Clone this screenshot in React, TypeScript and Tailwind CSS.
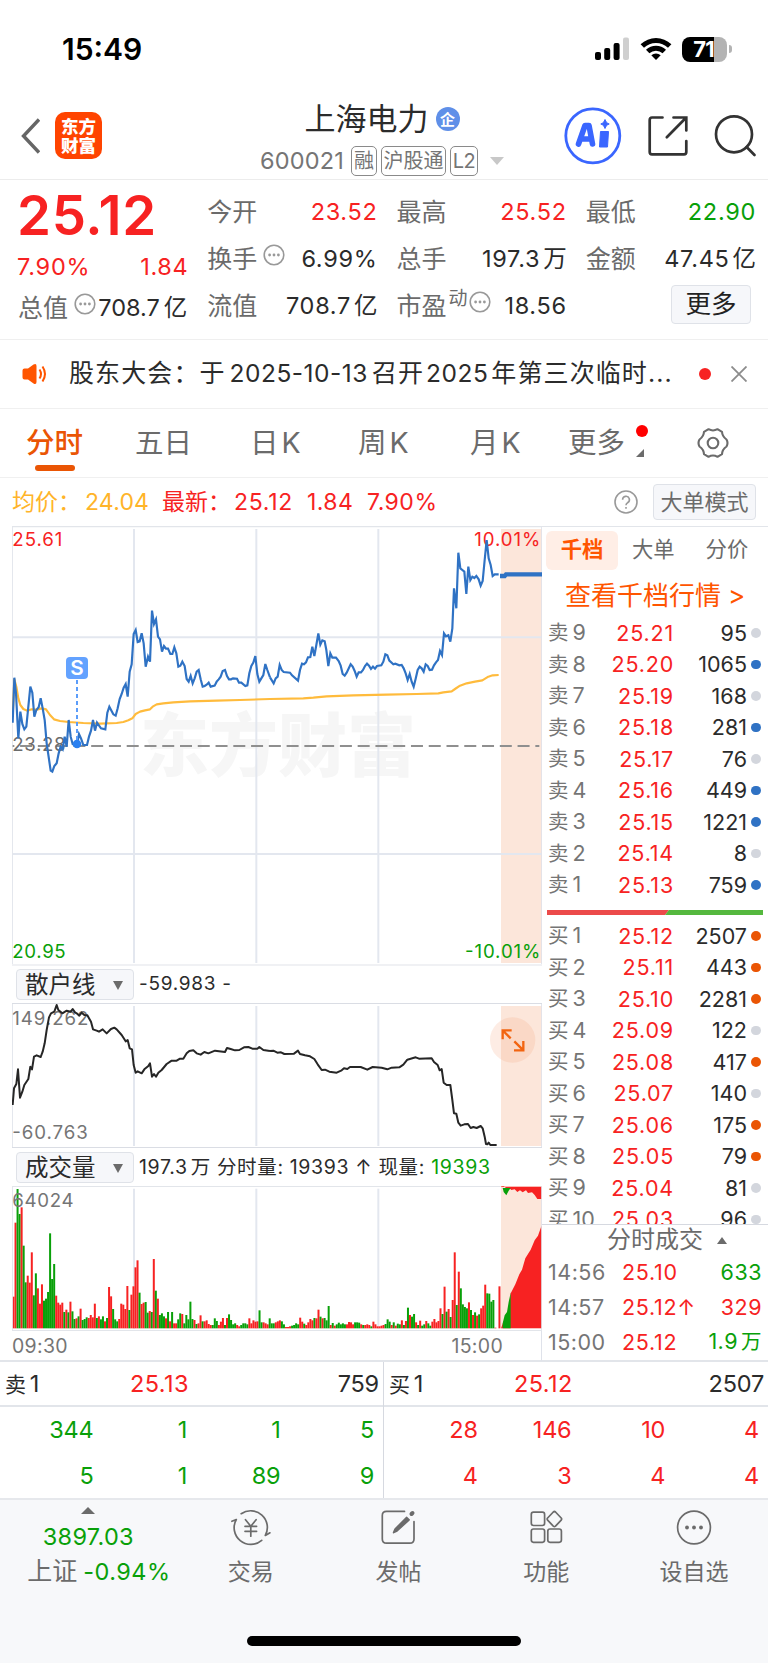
import type { ReactNode } from "react";

type Level = { label: string; price: string; volume: string; dot: "blue" | "orange" | "gray" };

const asks: Level[] = [
  { label: "卖9", price: "25.21", volume: "95", dot: "gray" },
  { label: "卖8", price: "25.20", volume: "1065", dot: "blue" },
  { label: "卖7", price: "25.19", volume: "168", dot: "gray" },
  { label: "卖6", price: "25.18", volume: "281", dot: "blue" },
  { label: "卖5", price: "25.17", volume: "76", dot: "gray" },
  { label: "卖4", price: "25.16", volume: "449", dot: "blue" },
  { label: "卖3", price: "25.15", volume: "1221", dot: "blue" },
  { label: "卖2", price: "25.14", volume: "8", dot: "gray" },
  { label: "卖1", price: "25.13", volume: "759", dot: "blue" },
];

const bids: Level[] = [
  { label: "买1", price: "25.12", volume: "2507", dot: "orange" },
  { label: "买2", price: "25.11", volume: "443", dot: "orange" },
  { label: "买3", price: "25.10", volume: "2281", dot: "orange" },
  { label: "买4", price: "25.09", volume: "122", dot: "gray" },
  { label: "买5", price: "25.08", volume: "417", dot: "orange" },
  { label: "买6", price: "25.07", volume: "140", dot: "gray" },
  { label: "买7", price: "25.06", volume: "175", dot: "orange" },
  { label: "买8", price: "25.05", volume: "79", dot: "orange" },
  { label: "买9", price: "25.04", volume: "81", dot: "gray" },
  { label: "买10", price: "25.03", volume: "96", dot: "gray" },
];

const dotColors = {
  blue: "bg-[#2f72c4]",
  orange: "bg-[#ea5504]",
  gray: "bg-[#d3d6dd]",
};

// Chart coordinates are in thirds of a pixel
const pricePoints =
  "38,608 43,473 48,520 55,655 61,575 67,612 73,628 79,620 91,500 97,518 103,590 109,570 116,562 122,535 128,565 134,600 140,670 152,752 157,755 163,738 170,730 176,700 182,680 188,688 194,650 200,680 206,600 212,650 218,672 231,675 237,642 243,655 250,675 261,675 267,650 273,632 279,600 285,632 291,608 303,625 316,628 322,578 328,560 340,583 347,587 353,565 359,537 365,522 371,503 377,492 383,530 389,455 395,433 401,342 407,330 413,366 419,364 425,340 431,370 437,440 444,410 450,425 456,272 462,312 468,298 474,350 480,358 486,395 492,378 498,386 504,386 511,402 517,402 523,382 529,400 535,440 541,437 547,425 554,438 560,477 566,485 572,468 578,490 584,475 590,455 596,450 602,478 608,500 614,498 620,494 626,488 632,500 644,497 650,485 656,478 662,470 668,453 675,450 681,468 687,478 693,478 699,475 711,476 717,488 724,488 736,498 742,496 748,460 754,438 760,428 766,408 772,462 778,485 784,475 790,465 796,432 802,450 810,472";
const pricePointsLate =
  "0,472 11,490 17,475 23,470 29,435 35,450 41,456 60,458 66,466 84,482 90,450 96,431 102,433 108,427 114,412 121,411 127,380 133,408 139,375 145,340 151,374 157,361 164,364 169,390 175,438 181,400 187,413 198,413 206,423 212,437 218,462 224,467 230,458 242,433 248,440 254,453 260,470 266,457 273,457 279,450 285,438 291,431 297,437 303,447 309,440 315,446 321,438 334,436 340,425 346,403 352,406 358,422 370,433 376,431 388,436 395,435 401,445 407,460 413,480 419,462 425,485 431,500 437,476 443,450 449,440 455,445 461,455 467,433 473,438 479,450 486,449 492,436 498,427 504,420 510,393 516,405 522,340 528,349 535,346 541,365 547,325 552,205 559,265 565,98 571,145 577,150 583,155 589,222 595,140 601,180 607,170 613,174 619,168 626,178 632,197 638,183 644,120 650,60 656,115 662,135 668,168 674,163 686,163";
const averagePoints =
  "38,590 43,478 49,500 55,535 61,555 70,567 82,572 95,568 110,569 125,565 138,568 150,585 162,598 180,603 206,606 250,609 300,611 350,609 370,606 385,601 397,595 407,582 420,575 435,571 450,568 458,560 470,553 490,550 520,547 570,544 650,542 720,540 810,537 910,535 940,533 980,529 1060,526 1160,524 1250,522 1315,520 1330,517 1355,514 1365,507 1380,497 1400,490 1425,485 1447,481 1465,470 1478,466 1496,465";
const retailPoints =
  "38,435 42,385 49,372 54,328 60,413 67,395 73,375 85,357 91,320 96,328 102,290 110,286 122,291 128,275 134,250 140,210 147,172 153,160 163,155 170,135 175,150 187,160 200,152 212,155 218,147 225,157 230,160 238,167 245,158 253,165 262,166 273,185 279,208 290,212 297,215 308,208 320,220 333,207 343,203 350,208 365,225 377,244 383,240 389,265 396,268 401,315 407,338 413,334 425,340 433,328 445,318 450,310 456,350 462,342 468,350 475,338 485,330 500,312 515,302 530,302 540,296 550,296 560,280 568,273 580,271 590,280 602,284 613,276 625,280 645,272 675,276 681,264 692,267 705,271 718,270 732,262 745,261 757,266 772,266 778,261 790,270 810,273";
const retailPointsLate =
  "0,273 10,272 22,278 33,277 43,282 72,281 84,272 90,282 105,286 120,289 133,297 143,313 155,330 165,329 178,335 200,338 215,331 222,325 232,327 240,321 272,321 292,329 308,321 335,323 352,328 365,323 388,322 400,314 412,299 437,292 447,296 485,295 492,306 503,315 509,331 515,327 521,368 530,375 541,375 547,420 552,460 559,461 565,488 572,497 583,493 594,492 602,504 610,501 620,504 632,498 638,505 644,530 648,552 652,553 656,548 661,555 680,555";

// One entry per minute, r = up, g = down
const volumeBars = (
  "r95 r317 g418 g343 r363 g248 g138 r158 r137 r228 g99 g165 r120 r74 r132 g83 g89 g109 g285 g148 " +
  "g193 r98 r77 r71 r77 g49 r56 g48 r80 g51 g28 r30 g36 r59 g25 g28 g33 r31 r40 r33 " +
  "r74 g31 r36 g27 g36 r21 g31 r124 r96 g58 g27 g21 r28 r74 r71 r58 r127 g55 r101 r126 " +
  "r183 r204 g107 r73 r77 g79 g47 r52 g49 r208 g113 r89 g40 g45 g36 r30 g49 r21 g49 r15 " +
  "r15 g27 g45 r43 g15 g40 g27 g80 g28 r25 g13 r15 r39 g21 r21 r24 r13 r10 g10 g30 " +
  "g22 r10 r20 r31 g10 r31 g42 g25 g12 g15 r10 r6 g10 g15 g15 g12 r30 r15 r24 r20 " +
  "r21 g54 g18 r18 r15 r12 g30 g15 g15 r18 r21 r24 g21 g12 r4 r4 r6 g8 g10 g15 " +
  "g12 r32 r20 g14 r10 r18 r28 r24 g31 r30 r56 g35 r30 g31 g24 g67 r10 g16 r8 g12 " +
  "g17 g12 g15 g12 r12 r19 r18 r12 g18 g18 g17 r12 g10 r10 r12 r10 g6 r20 r12 r6 " +
  "r6 r8 r10 g13 g27 g20 r10 g18 r8 g14 g12 r24 g10 r22 g62 r40 g35 g43 r18 g10 " +
  "r23 g8 g12 r22 g15 g8 r20 r28 r18 r22 r60 g43 r125 g50 r58 g34 r85 r228 g70 r170 " +
  "g120 g72 g64 g60 r78 g55 r40 g48 r38 g42 r60 r68 r131 g105 g104 g80 g85 r2 r0 r126"
).split(" ");

const gridX = [402, 769, 1135];

function MoreInfo({ className = "" }: { className?: string }) {
  return (
    <svg viewBox="0 0 22 22" className={`h-[22px] w-[22px] shrink-0 ${className}`} fill="none" stroke="#999">
      <circle cx="11" cy="11" r="9.8" strokeWidth="1.6" />
      <g fill="#999" stroke="none">
        <circle cx="6.6" cy="11" r="1.4" />
        <circle cx="11" cy="11" r="1.4" />
        <circle cx="15.4" cy="11" r="1.4" />
      </g>
    </svg>
  );
}

function Stat({ label, value, unit, color = "text-[#2b2b2b]", extra }: { label: string; value: string; unit?: string; color?: string; extra?: ReactNode }) {
  return (
    <div className="flex items-center justify-between">
      <div className="flex items-center text-[#6b6b6b]">
        <span className="text-[25px] tracking-normal">{label}</span>
        {extra}
      </div>
      <span className={`mr-[-1px] tracking-[0.7px] ${color}`}>
        {value}
        {unit && <span className="ml-[3px] tracking-normal">{unit}</span>}
      </span>
    </div>
  );
}

function StatusBar() {
  return (
    <div className="flex h-[90px] items-center justify-between pt-2 pr-[36px] pl-[62px]">
      <span className="text-[30px] font-semibold text-black">15:49</span>
      <div className="flex items-center">
        <svg width="34" height="24" viewBox="0 0 34 24">
          <rect x="0" y="15" width="6" height="8" rx="2" />
          <rect x="9.2" y="11" width="6" height="12" rx="2" />
          <rect x="18.6" y="6" width="6" height="17" rx="2" />
          <rect x="28" y="0.5" width="6" height="22.5" rx="2" fill="#cfcfcf" />
        </svg>
        <svg width="32" height="24" viewBox="0 0 32 24" className="ml-[11px]">
          <path d="M0.6 7.2A22.5 22.5 0 0 1 31.4 7.2L28 10.7A17.6 17.6 0 0 0 4 10.7Z" />
          <path d="M6 12.8A14.6 14.6 0 0 1 26 12.8L22.6 16.3A9.8 9.8 0 0 0 9.4 16.3Z" />
          <path d="M11.3 18.2A7 7 0 0 1 20.7 18.2L16 23Z" />
        </svg>
        <div className="ml-[10px] flex h-[25px] w-[45px] items-center justify-center overflow-hidden rounded-[8px] bg-linear-to-r from-black from-71% to-[#b3b3b3] to-71%">
          <span className="mr-[2px] text-[22px] leading-none font-bold tracking-[-1px] text-white">71</span>
        </div>
        <div className="ml-[2px] h-2 w-[3px] rounded-r-full bg-[#b3b3b3]" />
      </div>
    </div>
  );
}

function Header() {
  return (
    <header className="flex h-[90px] items-start border-b border-[#ececec] pl-5">
      <svg width="20" height="36" viewBox="0 0 20 36" className="mt-7 shrink-0" fill="none" stroke="#666" strokeWidth="3.4">
        <path d="M19 1.5 3.5 18 19 34.5" />
      </svg>
      <div className="mt-[22px] ml-[15px] grid h-[47px] w-[47px] shrink-0 place-content-center rounded-[10px] bg-[#ff4400] text-center text-[17.5px] leading-[19px] font-black text-white">
        <span>东方</span>
        <span>财富</span>
      </div>
      <div className="ml-[140px] flex w-[280px] shrink-0 flex-col items-center pt-[10px]">
        <div className="flex h-[38px] items-center">
          <span className="text-[31px] text-[#2b2b2b]">上海电力</span>
          <span className="ml-[7px] grid h-6 w-6 place-content-center rounded-full bg-[#5f8fe8] text-[15px] leading-none font-bold text-white">企</span>
        </div>
        <div className="mt-[7px] flex h-[31px] items-center gap-1 text-[#757575]">
          <span className="mr-[3px] text-[23.500px] tracking-[0.2px]">600021</span>
          <span className="grid h-[30px] w-[26px] place-content-center rounded-[5px] border-[1.500px] border-[#8a8a8a] text-[20px]">融</span>
          <span className="grid h-[30px] w-[65px] place-content-center rounded-[5px] border-[1.500px] border-[#8a8a8a] text-[20px]">沪股通</span>
          <span className="grid h-[30px] w-[28px] place-content-center rounded-[5px] border-[1.500px] border-[#8a8a8a] text-[20px] tracking-[-0.5px]">L2</span>
          <svg width="14" height="8" viewBox="0 0 14 8" className="ml-2" fill="#c8c8c8">
            <path d="M0 0h14L7 8z" />
          </svg>
        </div>
      </div>
      <svg width="58" height="58" viewBox="0 0 58 58" className="mt-[17px] ml-[42px] shrink-0">
        <circle cx="28.8" cy="28.8" r="27" fill="none" stroke="#3a66ff" strokeWidth="2.8" />
        <path d="M14.500 37 21 18.500h4L28.500 37M18 32h8" fill="none" stroke="#3a66ff" strokeWidth="5.6" strokeLinejoin="round" strokeLinecap="round" />
        <path d="M36.500 24.500h8l-1 15.500h-8z" fill="#3a66ff" stroke="#3a66ff" strokeLinejoin="round" />
        <path d="M41 12.500c1 2.500 1.600 3.400 4.200 4.500-2.600 1-3.200 2-4.200 4.500-1-2.500-1.600-3.500-4.200-4.500 2.600-1.100 3.200-2 4.200-4.500z" fill="#3a66ff" stroke="#3a66ff" />
      </svg>
      <svg width="40" height="42" viewBox="0 0 40 42" className="mt-[25px] ml-[25.500px] shrink-0" fill="none" stroke="#333" strokeWidth="2.7" strokeLinecap="round">
        <path d="M14.500 2.500H4Q1.700 2.500 1.700 5v32Q1.700 39.300 4 39.300h32Q38.300 39.300 38.300 37V26M25.500 2.500H38.300V15.500M38 2.800 18.800 22.300" />
      </svg>
      <svg width="44" height="44" viewBox="0 0 44 44" className="mt-[23px] ml-[26.500px] shrink-0" fill="none" stroke="#333" strokeWidth="2.7" strokeLinecap="round">
        <circle cx="20" cy="21.300" r="18" />
        <path d="M32.600 34 40.500 42" />
      </svg>
    </header>
  );
}

function Quote() {
  return (
    <section className="grid h-[160px] grid-cols-4 gap-x-[20px] border-b border-[#efefef] px-[18px] pr-[13px] text-[23.5px] leading-none">
      <div className="flex flex-col text-[#f72222]">
        <span className="mt-[16px] ml-[-1px] h-[38px] text-[54.500px] leading-[38px] font-semibold tracking-[0.700px]">25.12</span>
        <div className="mt-[19px] mr-[-1px] flex h-[28px] items-center justify-between tracking-[0.600px]">
          <span className="ml-[-1px] tracking-[0.800px]">7.90%</span>
          <span>1.84</span>
        </div>
        <div className="mt-[11px] flex h-[32px] items-center justify-between text-[#2b2b2b]">
          <span className="flex items-center text-[25px] text-[#6b6b6b]">
            总值
            <MoreInfo className="mb-2 ml-[6px]" />
          </span>
          <span className="whitespace-nowrap">708.7<span className="ml-[4px]">亿</span></span>
        </div>
      </div>
      <div className="flex flex-col gap-[15px] pt-[16px] *:h-8">
        <Stat label="今开" value="23.52" color="text-[#f72222]" />
        <Stat label="换手" value="6.99%" extra={<MoreInfo className="mb-2 ml-[6px]" />} />
        <Stat label="流值" value="708.7" unit="亿" />
      </div>
      <div className="flex flex-col gap-[15px] pt-[16px] *:h-8">
        <Stat label="最高" value="25.52" color="text-[#f72222]" />
        <Stat label="总手" value="197.3" unit="万" />
        <Stat
          label="市盈"
          value="18.56"
          extra={
            <>
              <span className="mb-4 ml-[2px] text-[19px]">动</span>
              <MoreInfo className="mb-2 ml-px" />
            </>
          }
        />
      </div>
      <div className="flex flex-col gap-[15px] pt-[16px]">
        <div className="*:h-8"><Stat label="最低" value="22.90" color="text-[#09a009]" /></div>
        <div className="*:h-8"><Stat label="金额" value="47.45" unit="亿" /></div>
        <button className="mt-[-5px] mr-[4px] h-[39px] w-[80px] self-end rounded-[4px] border border-[#dfe2e8] bg-[#f6f7fa] pb-[2px] text-[25.500px] text-[#222]">更多</button>
      </div>
    </section>
  );
}

function News() {
  return (
    <section className="flex h-[69px] items-center border-b border-[#f0f0f0] pl-[22px]">
      <svg width="26" height="22" viewBox="0 0 26 22" fill="#ff5500">
        <path d="M0.500 7.500Q.5 5.500 2.500 5.500H6L11.500 1.500Q14.500 0 14.500 3v16q0 3-3 1.500L6 16.500H2.500Q.5 16.500.5 14.500z" />
        <path d="M17.500 6.500q3 4.500 0 9M20.500 3.500q5 7.500 0 15" fill="none" stroke="#ff5500" strokeWidth="2" />
      </svg>
      <p className="ml-[21px] w-[606px] text-[25px] tracking-[1.100px] whitespace-nowrap text-[#2b2b2b]">
        股东大会：于<span className="ml-[4px] text-[24.500px] tracking-[0.500px]">2025-10-13</span>
        <span className="ml-[4px]">召开</span>
        <span className="ml-[2px] text-[24.500px] tracking-[0.500px]">2025</span>
        <span className="ml-[3px]">年第三次临时...</span>
      </p>
      <span className="ml-[24px] h-3 w-3 rounded-full bg-[#f72222]" />
      <svg width="16" height="16" viewBox="0 0 16 16" className="ml-[20px]" stroke="#8c8c8c" strokeWidth="1.8">
        <path d="M0.500 0.500 15.500 15.500M15.500 0.500.5 15.500" />
      </svg>
    </section>
  );
}

function ChartTabs() {
  return (
    <nav className="flex h-[69px] items-center border-b border-[#f0f0f0] text-[28.500px] text-[#6b6b6b]">
      <div className="relative ml-[26px] w-[57px] font-medium text-[#ea5504]">
        分时
        <span className="absolute bottom-[-7px] left-[9px] h-[6px] w-10 rounded-full bg-[#ea5504]" />
      </div>
      <span className="ml-[52px] w-[57px]">五日</span>
      <span className="ml-[58px] w-[52px]">日<span className="ml-[3px]">K</span></span>
      <span className="ml-[56px] w-[54px]">周<span className="ml-[3px]">K</span></span>
      <span className="ml-[58px] w-[52px]">月<span className="ml-[3px]">K</span></span>
      <div className="relative ml-[46px] w-[76px]">
        更多
        <span className="absolute top-[3px] right-[-4px] h-3 w-3 rounded-full bg-[#ff0000]" />
        <svg width="8" height="8" viewBox="0 0 8 8" className="absolute right-0 bottom-[7px]" fill="#6b6b6b">
          <path d="M8 0v8H0z" />
        </svg>
      </div>
      <svg width="32" height="32" viewBox="0 0 32 32" className="ml-[53px]" fill="none" stroke="#6b6b6b" strokeWidth="2.1" strokeLinejoin="round">
        <path d="M11.500 2.200Q16 4.800 20.500 2.200L25 4.800Q25.200 9.500 29.500 12.500Q31.500 16 29.500 19.500Q25.200 22.500 25 27.200L20.500 29.800Q16 27.200 11.500 29.800L7 27.200Q6.800 22.500 2.500 19.500Q.5 16 2.500 12.500Q6.800 9.500 7 4.800Z" />
        <circle cx="16" cy="16" r="5.300" />
      </svg>
    </nav>
  );
}

function InfoRow() {
  return (
    <div className="flex h-[48px] items-center pr-[12px] pl-[12px] text-[23px] text-[#f72222]">
      <span className="w-[73px] text-[#ffb429]">均价：</span>
      <span className="w-[77px] tracking-[0.200px] text-[#ffb429]">24.04</span>
      <span className="w-[72px]">最新：</span>
      <span className="w-[73px] tracking-[0.700px]">25.12</span>
      <span className="w-[60px] tracking-[0.400px]">1.84</span>
      <span className="tracking-[0.500px]">7.90%</span>
      <svg width="24" height="24" viewBox="0 0 24 24" className="ml-auto" fill="none" stroke="#999" strokeWidth="1.6">
        <circle cx="12" cy="12" r="11" />
        <path d="M8.600 9.800a3.400 3.400 0 1 1 5 2.900q-1.600.9-1.600 2.600M12 17v1.800" />
      </svg>
      <button className="ml-[15px] h-[36px] w-[103px] rounded-[4px] border border-[#dfe2e8] bg-[#f6f7fa] text-[22px] leading-none text-[#6b6b6b]">大单模式</button>
    </div>
  );
}

function PriceChart() {
  return (
    <svg viewBox="36 18 1590 1314" className="block h-[438px] w-[530px]" fill="none">
      <rect x="1503" y="27" width="123" height="1302" fill="#fce6da" />
      <g fill="#f6f6f6" fontFamily="'Noto Sans CJK SC', sans-serif" fontWeight="900" fontSize="207">
        <text x="420" y="754">东方财富</text>
      </g>
      <g stroke="#e3e7ef" strokeWidth="6">
        {gridX.map((x) => (
          <path key={x} d={`M${x} 27V1329`} />
        ))}
        <path d="M38 352H1624M38 1002H1624" />
      </g>
      <path d="M37 18V1332M1625 18V1332" stroke="#dfe2ea" strokeWidth="3" />
      <path d="M36 19.500H1626" stroke="#e2e5ea" strokeWidth="4" />
      <path d="M38 678H1618" stroke="#8f8f8f" strokeWidth="6" strokeDasharray="36 17.300" strokeDashoffset="31" />
      <g fontFamily="Inter, sans-serif" fontSize="56">
        <text x="37" y="77" fill="#f72222" textLength="150">25.61</text>
        <text x="1621" y="77" fill="#f72222" textAnchor="end" textLength="198">10.01%</text>
        <text x="37" y="694" fill="#6b6b6b" textLength="160">23.28</text>
        <text x="37" y="1313" fill="#09a009" textLength="160">20.95</text>
        <text x="1621" y="1313" fill="#09a009" textAnchor="end" textLength="226">-10.01%</text>
      </g>
      <polyline points={averagePoints} stroke="#ffbb3c" strokeWidth="6.500" strokeLinejoin="round" />
      <g stroke="#2f72c4" strokeWidth="6.500" strokeLinejoin="miter">
        <polyline points={pricePoints} />
        <polyline points={pricePointsLate} transform="translate(810 0)" />
        <path d="M1500 168h14l4-5h108" strokeWidth="13" />
      </g>
      <path d="M231 480V660" stroke="#5b9dfa" strokeWidth="6" strokeDasharray="12 9" />
      <circle cx="231" cy="672" r="13" fill="#2a80f0" />
      <rect x="198" y="411" width="66" height="66" rx="12" fill="#63a2ff" />
      <text x="231" y="466" textAnchor="middle" fill="#fff" fontFamily="Inter, sans-serif" fontWeight="600" fontSize="62">S</text>
    </svg>
  );
}

function RetailChart() {
  return (
    <svg viewBox="36 129 1590 435" className="block h-[145px] w-[530px]" fill="none">
      <rect x="1503" y="138" width="123" height="420" fill="#fce6da" />
      <g stroke="#e3e7ef" strokeWidth="6">
        {gridX.map((x) => (
          <path key={x} d={`M${x} 138V558`} />
        ))}
      </g>
      <path d="M37 129V564M1625 129V564" stroke="#dfe2ea" strokeWidth="3" />
      <path d="M36 130.500H1626M36 562.500H1626" stroke="#dadde4" strokeWidth="3" />
      <g fontFamily="Inter, sans-serif" fontSize="56" fill="#757575">
        <text x="37" y="195" textLength="228">149.262</text>
        <text x="37" y="538" textLength="226">-60.763</text>
      </g>
      <g stroke="#262626" strokeWidth="6" strokeLinejoin="round">
        <polyline points={retailPoints} />
        <polyline points={retailPointsLate} transform="translate(810 0)" />
      </g>
      <circle cx="1538" cy="240" r="68" fill="#f5a078" fillOpacity="0.2" />
      <path d="M1508 238v-27h27M1510 213l22 22M1570 243v28h-28M1568 269l-25-25" stroke="#f26410" strokeWidth="7" />
    </svg>
  );
}

function VolumeChart() {
  return (
    <svg viewBox="36 678 1590 435" className="block h-[145px] w-[530px]" fill="none">
      <rect x="1503" y="679" width="123" height="426" fill="#fce6da" />
      <g stroke="#e3e7ef" strokeWidth="6">
        {gridX.map((x) => (
          <path key={x} d={`M${x} 686V1106`} />
        ))}
      </g>
      {volumeBars.map((bar, i) => {
        const h = Number(bar.slice(1));
        return <rect key={i} x={37.5 + i * 6.1} y={1105 - h} width="6" height={h} fill={bar[0] === "r" ? "#f72222" : "#09a009"} />;
      })}
      <path d="M1503 1105l5-14 18-40 6-53h1l13-25 12-30 8-14 10-34 16-26 12-28 10-14 10-28h2v306z" fill="#f72222" />
      <path d="M1508 1105v-15l6-24 7-10 5-30 6-28v107z" fill="#09a009" />
      <path d="M1502 680h124v37h-14l-8-12-8-8-12 2-6-8-10 6-8-6-8 5-8-8-10 2-6-6-8 3-10-12z" fill="#f72222" />
      <path d="M1508 684h24l-6 8-7 14-8-10z" fill="#09a009" />
      <path d="M37 678V1113M1625 678V1113" stroke="#dfe2ea" strokeWidth="3" />
      <path d="M36 679.500H1502M36 1111.500H1626" stroke="#e2e5ea" strokeWidth="3" />
      <text x="37" y="742" fontFamily="Inter, sans-serif" fontSize="56" fill="#757575" textLength="184">64024</text>
    </svg>
  );
}

function IndicatorSelect({ name }: { name: string }) {
  return (
    <button className="ml-[4px] flex h-[31px] w-[118px] items-center justify-between rounded-[4px] border border-[#dfe2e8] bg-[#f6f7fa] pt-px pr-[10px] pl-[8px] text-[23.5px] leading-none text-[#2b2b2b]">
      {name}
      <svg width="10" height="9" viewBox="0 0 10 9" fill="#6b6b6b">
        <path d="M0 0h10L5 9z" />
      </svg>
    </button>
  );
}

function LevelRow({ level }: { level: Level }) {
  return (
    <div className="flex h-[31.5px] items-center text-[21.5px]">
      <span className="w-[61px] whitespace-nowrap text-[#757575]">
        <span className="mr-[4px] text-[20.500px]">{level.label[0]}</span>
        {level.label.slice(1)}
      </span>
      <span className="w-[65px] text-right tracking-[0.800px] text-[#f72222]">{level.price}</span>
      <span className="w-[73px] text-right text-[#2b2b2b]">{level.volume}</span>
      <span className={`ml-[4px] h-[9.500px] w-[9.500px] rounded-full ${dotColors[level.dot]}`} />
    </div>
  );
}

function OrderBook() {
  return (
    <aside className="flex h-[835px] w-[226px] flex-col border-t border-[#e2e5ea]">
      <div className="mt-[4px] flex h-[38px] items-center pl-[4px] text-[21.300px] text-[#6b6b6b]">
        <span className="grid h-[39px] w-[72px] place-content-center rounded-[6px] bg-[#ffeee6] font-bold text-[#ff5500]">千档</span>
        <span className="ml-[14px]">大单</span>
        <span className="ml-[31px]">分价</span>
      </div>
      <div className="mt-[9px] h-[35px] pl-[23px] text-[26px] leading-[35px] whitespace-nowrap text-[#ff5500]">
        查看千档行情<span className="ml-[7px]">&gt;</span>
      </div>
      <div className="mt-[4px] pl-[6px]">
        {asks.map((a) => (
          <LevelRow key={a.label} level={a} />
        ))}
      </div>
      <svg width="216" height="5" viewBox="0 0 216 5" className="mt-[9.500px] ml-[5px] shrink-0">
        <path d="M0 0h122l-4 5H0z" fill="#ec4a4a" />
        <path d="M122 0h94v5H118z" fill="#55b83e" />
      </svg>
      <div className="mt-[5px] h-[304px] overflow-hidden pl-[6px]">
        {bids.map((b) => (
          <LevelRow key={b.label} level={b} />
        ))}
      </div>
      <div className="flex h-[31px] shrink-0 items-center border-t border-[#d6d9e0] pl-[65px] text-[24px] text-[#6b6b6b]">
        分时成交
        <svg width="10" height="7" viewBox="0 0 10 7" className="ml-[14px]" fill="#6b6b6b">
          <path d="M0 7h10L5 0z" />
        </svg>
      </div>
      {[
        ["14:56", "25.10", "", "633", "", "text-[#09a009]"],
        ["14:57", "25.12", "↑", "329", "", "text-[#f72222]"],
        ["15:00", "25.12", "", "1.9", "万", "text-[#09a009]"],
      ].map(([time, price, arrow, vol, unit, color]) => (
        <div key={time} className="flex h-[34.700px] items-center pr-[6px] pl-[6px] text-[21.500px] tracking-[0.500px]">
          <span className="w-[74px] text-[#757575]">{time}</span>
          <span className="tracking-[0.700px] text-[#f72222]">{price}{arrow && <span className="tracking-normal">{arrow}</span>}</span>
          <span className={`ml-auto ${color}`}>{vol}{unit && <span className="ml-[3px] text-[20.500px]">{unit}</span>}</span>
        </div>
      ))}
    </aside>
  );
}

function Queue({ side, price, total, rows, color }: { side: string; price: string; total: string; rows: string[][]; color: string }) {
  return (
    <div className="w-1/2 border-r border-[#d6d9e0] text-[23.500px] tracking-[-0.200px] last:border-r-0">
      <div className="flex h-[45px] items-center border-b-2 border-[#e2e5ea] pr-[4px] pl-[5px] text-[#2b2b2b]">
        <span className="w-[125px]"><span className="mr-[4px] text-[21px]">{side}</span>1</span>
        <span className="tracking-[0.400px] text-[#f72222]">{price}</span>
        <span className="ml-auto">{total}</span>
      </div>
      <div className={`pr-[9px] ${color}`}>
        {rows.map((row, i) => (
          <div key={i} className="grid h-[46px] grid-cols-4 items-center text-right">
            {row.map((n, j) => (
              <span key={j}>{n}</span>
            ))}
          </div>
        ))}
      </div>
    </div>
  );
}

function NavItem({ label, children }: { label: string; children: ReactNode }) {
  return (
    <div className="flex w-[148px] flex-col items-center pt-[9px] text-[23px] text-[#6b6b6b]">
      <svg width="40" height="38" viewBox="0 0 40 38" fill="none" stroke="#6b6b6b" strokeWidth="1.700" strokeLinecap="round" strokeLinejoin="round">
        {children}
      </svg>
      <span className="mt-[10px] leading-[30px]">{label}</span>
    </div>
  );
}

function BottomBar() {
  return (
    <footer className="h-[165px] border-t-2 border-[#e6e8ec] bg-[#f7f8fa]">
      <div className="flex h-[112px]">
        <div className="flex w-[177px] flex-col items-center pt-[7px]">
          <svg width="14" height="7" viewBox="0 0 14 7" fill="#6b6b6b">
            <path d="M0 7h14L7 0z" />
          </svg>
          <span className="mt-[6px] text-[23.500px] leading-[34px] tracking-[0.300px] text-[#09a009]">3897.03</span>
          <span className="ml-[21px] text-[25px] leading-[35px] whitespace-nowrap text-[#6b6b6b]">
            上证<span className="ml-[6px] text-[23.500px] tracking-[0.500px] text-[#09a009]">-0.94%</span>
          </span>
        </div>
        <NavItem label="交易">
          <path d="M10.200 4.700A16.700 16.700 0 0 1 34.300 26.500L39 23.800M30.700 31.400A16.700 16.700 0 0 1 5.300 10.500L0.900 12.300" />
          <path d="M14.500 10.700l5.300 6.500 5.300-6.500M19.800 17.200v10M14 17.300h11.600M14 22.300h11.600" />
        </NavItem>
        <NavItem label="发帖">
          <path d="M26.500 2.400H8.500Q4.300 2.400 4.300 6.600v23.400Q4.300 34.200 8.500 34.200h23.300Q36 34.200 36 30V12.500" />
          <path d="M33.500 5l1-1" strokeWidth="4" />
          <path d="M28.500 8.500l2.600 2.300L19 22l-3.400 1.600 1.500-3.500z" fill="#6b6b6b" />
        </NavItem>
        <NavItem label="功能">
          <rect x="5.300" y="3.200" width="13.300" height="13.300" rx="2.200" />
          <rect x="5.300" y="20" width="13.300" height="13.300" rx="2.200" />
          <rect x="21.800" y="20" width="13.600" height="13.300" rx="2.200" />
          <path d="M27.300 3q1.100-1 2.200 0l5.700 6q.9 1.100 0 2.200l-5.700 6q-1.100 1-2.200 0l-5.700-6q-.9-1.100 0-2.200z" />
        </NavItem>
        <NavItem label="设自选">
          <circle cx="20" cy="18.500" r="16.400" />
          <g fill="#6b6b6b" stroke="none">
            <circle cx="13" cy="18.500" r="1.900" />
            <circle cx="20" cy="18.500" r="1.900" />
            <circle cx="27" cy="18.500" r="1.900" />
          </g>
        </NavItem>
      </div>
      <div className="mx-auto mt-[24px] h-[10px] w-[274px] rounded-full bg-black" />
    </footer>
  );
}

export default function App() {
  return (
    <div className="h-[1663px] w-[768px] overflow-hidden bg-white font-['Inter','Noto_Sans_CJK_SC',sans-serif]">
      <StatusBar />
      <Header />
      <Quote />
      <News />
      <ChartTabs />
      <InfoRow />

      <div className="flex h-[834px]">
        <div className="w-[530px] shrink-0 ml-[12px]">
          <PriceChart />
          <div className="flex h-[39px] items-center border-t-2 border-[#f0f1f4] text-[19px] text-[#2b2b2b]">
            <IndicatorSelect name="散户线" />
            <span className="ml-[5px] tracking-[0.700px]">-59.983 -</span>
          </div>
          <RetailChart />
          <div className="flex h-[38px] items-center pt-px text-[19.500px] whitespace-nowrap text-[#2b2b2b]">
            <IndicatorSelect name="成交量" />
            <span className="ml-[5px] tracking-[0.650px]">
              197.3<span className="ml-[3px]">万</span> 分时量: 19393 ↑ 现量: <span className="text-[#09a009]">19393</span>
            </span>
          </div>
          <VolumeChart />
          <div className="flex h-[30px] items-center justify-between border-r border-[#dfe2ea] pt-[2px] pr-[38px] text-[19.500px] tracking-[0.300px] text-[#757575]">
            <span>09:30</span>
            <span>15:00</span>
          </div>
        </div>
        <OrderBook />
      </div>

      <div className="flex h-[138px] border-t-2 border-[#e2e5ea]">
        <Queue side="卖" price="25.13" total="759" color="text-[#09a009]" rows={[["344", "1", "1", "5"], ["5", "1", "89", "9"]]} />
        <Queue side="买" price="25.12" total="2507" color="text-[#f72222]" rows={[["28", "146", "10", "4"], ["4", "3", "4", "4"]]} />
      </div>
      <BottomBar />
    </div>
  );
}
